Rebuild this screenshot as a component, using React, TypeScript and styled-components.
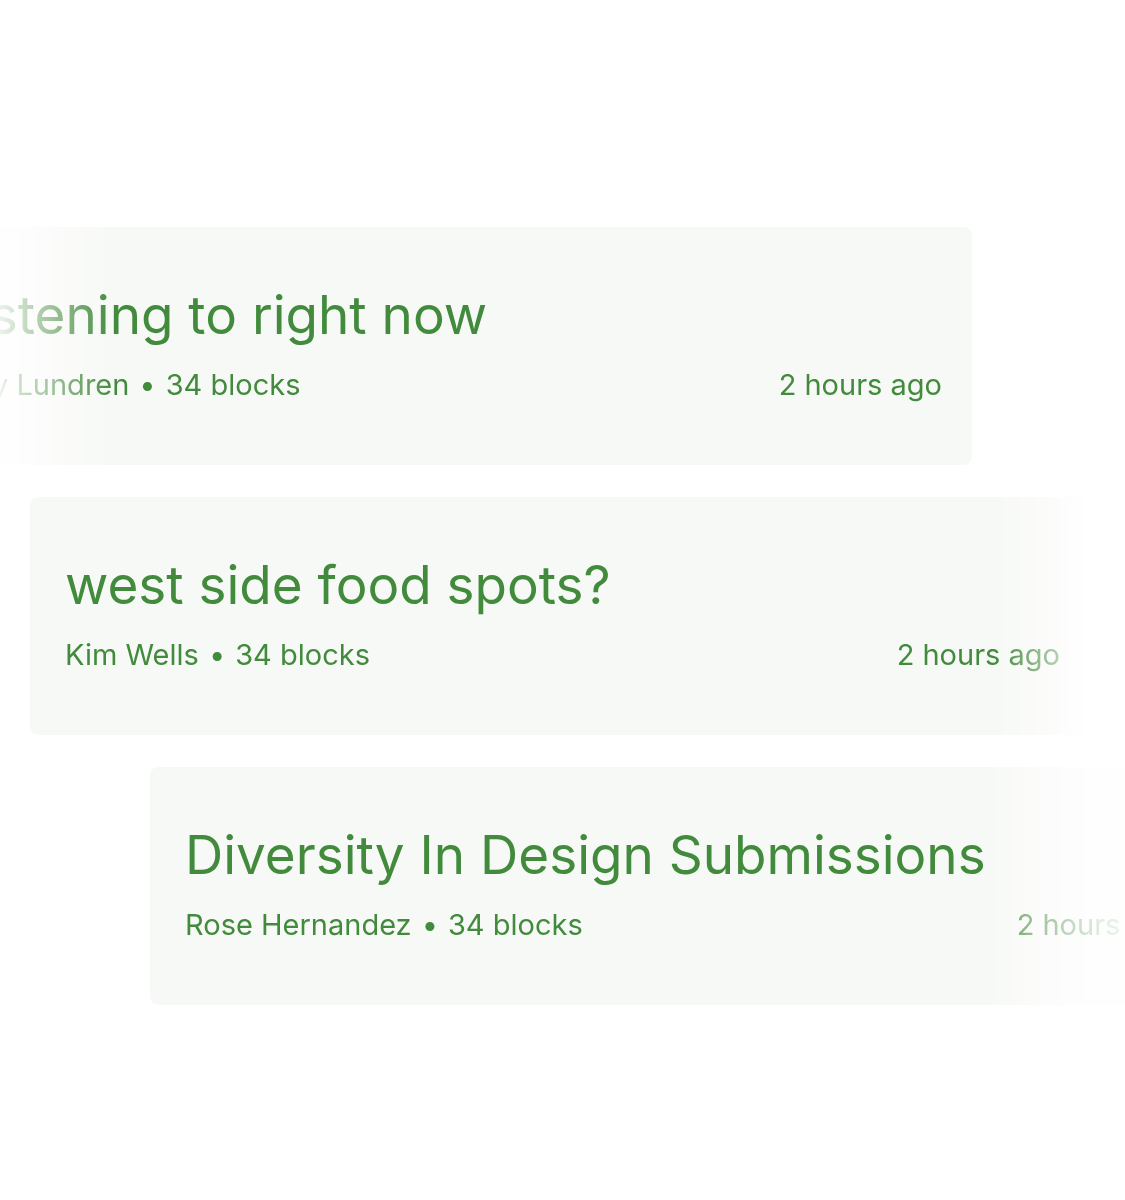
import styled, { createGlobalStyle } from "styled-components";

const GlobalStyle = createGlobalStyle`
  html, body {
    margin: 0;
    padding: 0;
    background: #ffffff;
    overflow: hidden;
  }
  body {
    font-family: Inter, "Noto Sans", sans-serif;
  }
`;

const Stack = styled.div`
  display: flex;
  flex-direction: column;
  align-items: flex-start;
  gap: 32px;
  padding-top: 227px;
  height: 1200px;
  box-sizing: border-box;
`;

const Card = styled.div<{ $offset: number; $fade: string }>`
  flex: none;
  width: 1060px;
  height: 238px;
  box-sizing: border-box;
  margin-left: ${(p) => p.$offset}px;
  padding: 58px 30px 0 35px;
  background: #f7f9f6;
  border-radius: 8px;
  color: #428a3c;
  -webkit-mask-image: ${(p) => p.$fade};
  mask-image: ${(p) => p.$fade};
`;

const Title = styled.h2`
  margin: 0;
  font-size: 53px;
  font-weight: 400;
  line-height: 60px;
  white-space: nowrap;
`;

const Meta = styled.div`
  display: flex;
  justify-content: space-between;
  align-items: baseline;
  margin-top: 22px;
  font-size: 29px;
  line-height: 36px;
  white-space: nowrap;
`;

const Dot = styled.span`
  margin: 0 10px;
`;

interface Collection {
  title: string;
  author: string;
  blocks: number;
  updated: string;
  offset: number;
  fade: string;
}

const collections: Collection[] = [
  {
    title: "Listening to right now",
    author: "Amy Lundren",
    blocks: 34,
    updated: "2 hours ago",
    offset: -88,
    fade: "linear-gradient(to right, transparent 7%, black 19%)",
  },
  {
    title: "west side food spots?",
    author: "Kim Wells",
    blocks: 34,
    updated: "2 hours ago",
    offset: 30,
    fade: "linear-gradient(to right, black 91%, rgba(0,0,0,0.4) 97%, transparent 100%)",
  },
  {
    title: "Diversity In Design Submissions",
    author: "Rose Hernandez",
    blocks: 34,
    updated: "2 hours ago",
    offset: 150,
    fade:
      "linear-gradient(to right, black 79%, rgba(0,0,0,0.55) 83%, rgba(0,0,0,0.15) 90%, transparent 96%)",
  },
];

export default function App() {
  return (
    <>
      <GlobalStyle />
      <Stack>
        {collections.map((c) => (
          <Card key={c.title} $offset={c.offset} $fade={c.fade}>
            <Title>{c.title}</Title>
            <Meta>
              <span>
                {c.author}
                <Dot>•</Dot>
                {c.blocks} blocks
              </span>
              <span>{c.updated}</span>
            </Meta>
          </Card>
        ))}
      </Stack>
    </>
  );
}
